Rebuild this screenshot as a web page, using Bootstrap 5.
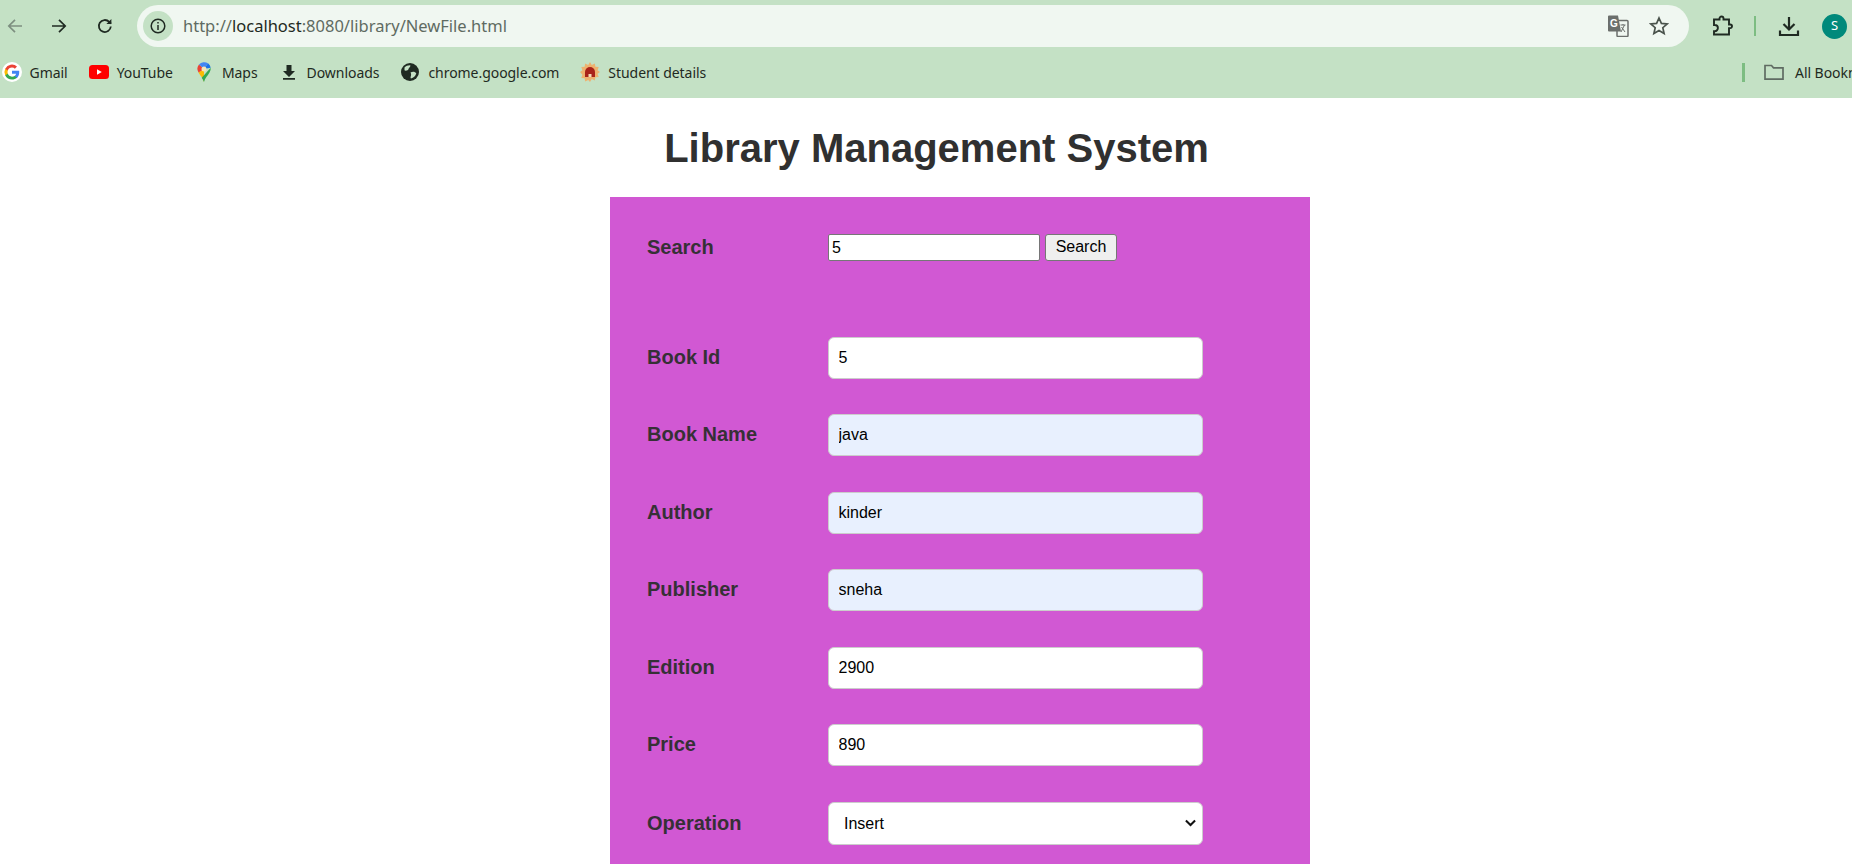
<!DOCTYPE html>
<html lang="en">
  <head>
    <meta charset="UTF-8" />
    <meta name="viewport" content="width=device-width, initial-scale=1.0" />
    <title>Library Management System</title>
    <link href="https://cdn.jsdelivr.net/npm/bootstrap@5.3.3/dist/css/bootstrap.min.css" rel="stylesheet" />
    <style>
      body {
        font-family: "Liberation Sans", Arial, sans-serif;
        background-color: #fff;
      }
      .browser-top {
        height: 98px;
        background-color: #c4e1c5;
        font-family: "Noto Sans", sans-serif;
        color: #1f2a22;
      }
      .tool-row {
        height: 52px;
      }
      .nav-btn {
        width: 30px;
        flex: none;
      }
      .nav-second {
        margin-left: 14px;
      }
      .nav-third {
        margin-left: 16px;
      }
      .address-bar {
        height: 42px;
        margin-left: 17px;
        width: 1552px;
        flex: none;
        padding-left: 6px;
        padding-right: 20px;
        background-color: #f0f7f1;
        border-radius: 21px;
        font-size: 16.5px;
        color: #5f6b62;
      }
      .info-pill {
        width: 30px;
        height: 30px;
        background-color: #c4e1c5;
        margin-right: 10px;
      }
      .url-host {
        color: #1f2a22;
      }
      .star-icon {
        margin-left: 20px;
      }
      .ext-icon {
        margin-left: 22px;
      }
      .divider-line {
        width: 2px;
        height: 20px;
        margin: 0 21px;
        background-color: #7dbd82;
      }
      .avatar {
        width: 25px;
        height: 25px;
        margin-left: 21px;
        background-color: #00897b;
        color: #fff;
        font-size: 13px;
      }
      .bookmarks {
        height: 40px;
        padding-left: 1.5px;
        font-size: 14px;
        letter-spacing: -0.05px;
        white-space: nowrap;
      }
      .bm-item {
        margin-right: 21px;
        gap: 8px;
      }
      .bm-slot {
        width: 20px;
        height: 20px;
      }
      .all-marks {
        width: 110px;
        overflow: hidden;
        flex: none;
      }
      .bm-divider {
        width: 3px;
        height: 19px;
        flex: none;
        margin-right: 19px;
        background-color: #7dbd82;
      }
      .folder-icon {
        flex: none;
        margin-right: 11px;
      }
      .page-title {
        font-size: 40px;
        font-weight: 700;
        color: #303030;
        text-align: center;
        line-height: 46px;
        margin: 26.5px 0 26.5px 0;
        padding-left: 21px;
      }
      .lib-panel {
        width: 700px;
        margin-left: 610px;
        background-color: #d158d3;
        padding: 37px 0 0 37px;
      }
      .form-line {
        height: 42px;
        margin-bottom: 35.5px;
      }
      .search-line {
        height: 27px;
        margin-bottom: 75.5px;
      }
      .form-name {
        width: 181px;
        font-size: 20px;
        font-weight: 700;
        color: #363036;
        margin: 0 0 2px 0;
      }
      .form-name-low {
        margin-bottom: 0;
      }
      .search-box {
        width: 212px;
        height: 27px;
        font-size: 16px;
        padding: 1px 3px;
        border: 1px solid #767676;
        border-radius: 2px;
        color: #000;
      }
      .search-btn {
        height: 27px;
        width: 72px;
        margin-left: 5px;
        font-size: 16px;
        padding: 0 0 2px 0;
        background-color: #efefef;
        border: 1px solid #767676;
        border-radius: 3px;
        color: #000;
      }
      .text-box {
        width: 375px;
        height: 42px;
        font-size: 16px;
        padding: 0 9.5px;
        border: 1px solid #ccc;
        border-radius: 6px;
        color: #000;
        background-color: #fff;
      }
      .text-box.autofilled {
        background-color: #e8f0fe;
      }
      select.text-box {
        height: 43px;
        margin-top: 1px;
        padding: 1px 0 0 15px;
        background-image: url("data:image/svg+xml,%3csvg xmlns='http://www.w3.org/2000/svg' viewBox='0 0 12 8'%3e%3cpath fill='none' stroke='%23111' stroke-width='2.2' d='M1 1.200l5 5 5-5'/%3e%3c/svg%3e");
        background-position: right 6px center;
        background-size: 11px 8px;
      }
    </style>
  </head>
  <body class="vh-100 overflow-hidden d-flex flex-column">
    <div class="browser-top flex-shrink-0">
      <div class="tool-row d-flex align-items-center">
        <div class="nav-btn d-flex justify-content-center">
          <svg width="20" height="20" viewBox="0 0 20 20" fill="none" stroke="#7d8f80" stroke-width="1.7"><path d="M17 10H4M10 3.800 3.800 10l6.200 6.200"/></svg>
        </div>
        <div class="nav-btn nav-second d-flex justify-content-center">
          <svg width="20" height="20" viewBox="0 0 20 20" fill="none" stroke="#1f2a22" stroke-width="1.7"><path d="M3 10h13M10 3.800l6.200 6.200-6.200 6.200"/></svg>
        </div>
        <div class="nav-btn nav-third d-flex justify-content-center">
          <svg width="20" height="20" viewBox="0 0 20 20" fill="none" stroke="#1f2a22" stroke-width="1.8"><path d="M15.800 10.500a6 6 0 1 1-1.600-4.600L16 7.600"/><path d="M16.400 3v5h-5" fill="#1f2a22" stroke="none"/></svg>
        </div>
        <div class="address-bar d-flex align-items-center">
          <div class="info-pill rounded-circle d-flex align-items-center justify-content-center">
            <svg width="18" height="18" viewBox="0 0 18 18" fill="none" stroke="#1f2a22" stroke-width="1.500"><circle cx="9" cy="9" r="6.800"/><path d="M9 8v5M9 5v1.600"/></svg>
          </div>
          <span>http://<span class="url-host">localhost</span>:8080/library/NewFile.html</span>
          <svg class="ms-auto" width="22" height="22" viewBox="0 0 22 22"><rect x="10" y="5.500" width="11" height="16" rx="1" fill="#f0f7f1" stroke="#6b6f6c" stroke-width="1.500"/><path d="M1 1.500A1 1 0 0 1 2 .5h9l3 16H2a1 1 0 0 1-1-1z" fill="#6b6f6c"/><text x="3" y="12" font-size="10" font-weight="700" fill="#fff" font-family="Liberation Sans">G</text><path d="M13.500 10h5M16 9v1M14 17l3.500-7M14.500 12l3.500 5" stroke="#6b6f6c" stroke-width="1" fill="none"/></svg>
          <svg class="star-icon" width="20" height="20" viewBox="0 0 20 20" fill="none" stroke="#4a534c" stroke-width="1.700"><path d="m10 2 2.400 5.400 5.800.5-4.400 3.800 1.300 5.700-5.100-3-5.100 3 1.300-5.700-4.400-3.800 5.800-.5z"/></svg>
        </div>
        <svg class="ext-icon" width="22" height="22" viewBox="0 0 22 22" fill="none" stroke="#1f2a22" stroke-width="1.900"><path d="M3 4.500h5.500V3.500a2 2 0 0 1 4 0v1h5.500v5h1.200a1.800 1.800 0 0 1 0 3.600H18v6.400H3v-3.300h.8a3.100 3.100 0 0 0 0-6.200H3z"/></svg>
        <span class="divider-line"></span>
        <svg width="24" height="24" viewBox="0 0 24 24" fill="none" stroke="#1f2a22" stroke-width="2.200"><path d="M12 3v12M6.500 10l5.500 5.500 5.500-5.500M3 16.500V21h18v-4.500"/></svg>
        <span class="avatar rounded-circle d-flex align-items-center justify-content-center">S</span>
      </div>
      <div class="bookmarks d-flex align-items-center">
        <div class="bm-item d-flex align-items-center">
          <svg class="bm-slot" viewBox="0 0 18 18"><circle cx="9" cy="9" r="9" fill="#fff"/><path d="M15.500 9.200c0-.5 0-1-.1-1.400H9v2.700h3.700a3.200 3.200 0 0 1-1.400 2.100v1.700h2.200c1.300-1.200 2-3 2-5.100z" fill="#4285f4"/><path d="M9 15.800c1.800 0 3.400-.6 4.500-1.600l-2.200-1.700c-.6.400-1.400.7-2.300.7-1.800 0-3.300-1.200-3.800-2.800H2.900v1.700A6.800 6.800 0 0 0 9 15.800z" fill="#34a853"/><path d="M5.200 10.400a4 4 0 0 1 0-2.700V6H2.900a6.800 6.800 0 0 0 0 6.100z" fill="#fbbc05"/><path d="M9 5c1 0 1.900.4 2.600 1l1.900-1.900A6.800 6.800 0 0 0 2.900 6l2.300 1.700C5.700 6.200 7.200 5 9 5z" fill="#ea4335"/></svg>
          <span>Gmail</span>
        </div>
        <div class="bm-item d-flex align-items-center">
          <svg class="bm-slot" viewBox="0 0 20 20"><rect y="3" width="20" height="14" rx="3.500" fill="#f00"/><path d="M8 7.200v5.600l4.800-2.800z" fill="#fff"/></svg>
          <span>YouTube</span>
        </div>
        <div class="bm-item d-flex align-items-center">
          <svg class="bm-slot" viewBox="0 0 20 20"><path d="M10 20c-1-4-3.500-6-5.500-9.500L10 7z" fill="#fbbc04"/><path d="M4.500 10.500A7 7 0 0 1 5 2.500L10 7z" fill="#ea4335"/><path d="M5 2.500A7 7 0 0 1 14 1.300L10 7z" fill="#4285f4"/><path d="M14 1.300a7 7 0 0 1 2.700 4.500L10 7z" fill="#1a73e8"/><path d="M16.700 5.800a7 7 0 0 1-1.200 4.700C13.500 14 11 16 10 20c-.6-1.800-1.400-3.100-2.300-4.300z" fill="#34a853"/><circle cx="10" cy="7" r="2.500" fill="#f4e6b8"/></svg>
          <span>Maps</span>
        </div>
        <div class="bm-item d-flex align-items-center">
          <svg class="bm-slot" viewBox="0 0 20 20" fill="#1f2a22"><path d="M7.500 3h5v6H16l-6 6-6-6h3.500zM4 16h12v1.800H4z"/></svg>
          <span>Downloads</span>
        </div>
        <div class="bm-item d-flex align-items-center">
          <svg class="bm-slot" viewBox="0 0 20 20"><circle cx="10" cy="10" r="9" fill="#1f2a22"/><path d="M4.500 5.500c1.500-1.600 3.500-2.300 5.800-2.200.6 1.600-1.500 2.200-1.800 3.700-.2 1.400-3 2.300-4 1.300zM10.500 10.500c2.200-1.500 4.800-.8 5.800.7-.8 2.700-2.800 4.700-5.300 5.300-1.300-1.500 1.200-3-.5-6z" fill="#c4e1c5"/></svg>
          <span>chrome.google.com</span>
        </div>
        <div class="bm-item d-flex align-items-center">
          <svg class="bm-slot" viewBox="0 0 20 20"><path d="m10 0 1.800 3 3-1.500.6 3.200 3.300.4-1.100 3.100L20 10l-2.400 1.800 1.100 3.100-3.300.4-.6 3.200-3-1.500L10 20l-1.800-2-3 1.500-.6-3.200-3.300-.4 1.100-3.100L0 10l2.400-1.800-1.100-3.100 3.300-.4.600-3.200 3 1.500z" fill="#eeb16f"/><path d="M5 15v-5a5 5 0 0 1 10 0v5z" fill="#a92219"/><path d="M8.500 15v-3h3v3z" fill="#f3d9b5"/></svg>
          <span>Student details</span>
        </div>
        <div class="all-marks d-flex align-items-center ms-auto">
          <span class="bm-divider"></span>
          <svg class="folder-icon" width="20" height="16" viewBox="0 0 20 16" fill="none" stroke="#5f6b62" stroke-width="1.700"><path d="M1 1.500h6.500l2 2.300H19v11.300H1z"/></svg>
          <span>All Bookmarks</span>
        </div>
      </div>
    </div>

    <h1 class="page-title">Library Management System</h1>

    <form class="lib-panel flex-grow-1">
      <div class="search-line d-flex align-items-center">
        <label class="form-name" for="q">Search</label>
        <input class="search-box" id="q" type="text" value="5" />
        <button class="search-btn" type="button">Search</button>
      </div>
      <div class="form-line d-flex align-items-center">
        <label class="form-name" for="bid">Book Id</label>
        <input class="text-box" id="bid" type="text" value="5" />
      </div>
      <div class="form-line d-flex align-items-center">
        <label class="form-name" for="bname">Book Name</label>
        <input class="text-box autofilled" id="bname" type="text" value="java" />
      </div>
      <div class="form-line d-flex align-items-center">
        <label class="form-name" for="author">Author</label>
        <input class="text-box autofilled" id="author" type="text" value="kinder" />
      </div>
      <div class="form-line d-flex align-items-center">
        <label class="form-name" for="pub">Publisher</label>
        <input class="text-box autofilled" id="pub" type="text" value="sneha" />
      </div>
      <div class="form-line d-flex align-items-center">
        <label class="form-name" for="edition">Edition</label>
        <input class="text-box" id="edition" type="text" value="2900" />
      </div>
      <div class="form-line d-flex align-items-center">
        <label class="form-name" for="price">Price</label>
        <input class="text-box" id="price" type="text" value="890" />
      </div>
      <div class="form-line d-flex align-items-center">
        <label class="form-name form-name-low" for="op">Operation</label>
        <select class="form-select text-box" id="op"><option>Insert</option><option>Update</option><option>Delete</option></select>
      </div>
    </form>
    <script src="https://cdn.jsdelivr.net/npm/bootstrap@5.3.3/dist/js/bootstrap.bundle.min.js"></script>
  </body>
</html>
